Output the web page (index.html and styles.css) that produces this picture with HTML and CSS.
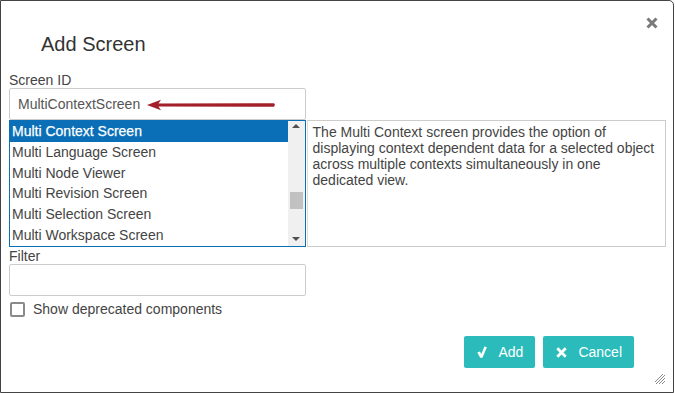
FILE: index.html
```html
<!DOCTYPE html>
<html>
<head>
<meta charset="utf-8">
<link rel="stylesheet" href="styles.css">
</head>
<body>
<div class="dialog">
  <button class="close" aria-label="Close">
    <svg width="12" height="12" viewBox="0 0 12 12"><path d="M1.5 1.5 L10.5 10.5 M10.5 1.5 L1.5 10.5" stroke="#7a7a7a" stroke-width="3" fill="none"/></svg>
  </button>
  <h1 class="title">Add Screen</h1>
  <div class="content">
    <label class="label">Screen ID</label>
    <div class="input id-input">
      <span class="value">MultiContextScreen</span>
      <svg class="arrow" width="130" height="12" viewBox="0 0 130 12"><path d="M0 6 L14 0.8 L11.5 4.4 L127 4.3 Q128.6 6 127 7.7 L11.5 7.6 L14 11.2 Z" fill="#a3202a"/></svg>
    </div>
    <div class="row">
      <div class="list">
        <ul class="items">
          <li class="item selected">Multi Context Screen</li>
          <li class="item">Multi Language Screen</li>
          <li class="item">Multi Node Viewer</li>
          <li class="item">Multi Revision Screen</li>
          <li class="item">Multi Selection Screen</li>
          <li class="item">Multi Workspace Screen</li>
        </ul>
        <div class="scrollbar">
          <span class="sb-arrow up"></span>
          <span class="sb-track"><span class="sb-thumb"></span></span>
          <span class="sb-arrow down"></span>
        </div>
      </div>
      <div class="desc">The Multi Context screen provides the option of displaying context dependent data for a selected object across multiple contexts simultaneously in one dedicated view.</div>
    </div>
    <label class="label filter-label">Filter</label>
    <div class="input filter-input"></div>
    <label class="check-row"><span class="checkbox"></span><span>Show deprecated components</span></label>
  </div>
  <div class="footer">
    <button class="btn">
      <svg width="10" height="12" viewBox="0 0 10 12"><path d="M0.3 6.4 L2.9 5.4 L4.4 8 L7.4 0.4 L9.9 1.2 L5.4 11.7 L3.2 11.7 Z" fill="#fff"/></svg>
      <span>Add</span>
    </button>
    <button class="btn">
      <svg width="11" height="11" viewBox="0 0 11 11"><path d="M1.3 1.3 L9.7 9.7 M9.7 1.3 L1.3 9.7" stroke="#fff" stroke-width="2.8" fill="none"/></svg>
      <span>Cancel</span>
    </button>
  </div>
  <svg class="grip" width="12" height="12" viewBox="0 0 12 12"><path d="M11 2 L2 11 M11 5 L5 11 M11 8 L8 11 M9 1 L1 9" stroke="#8a8a8a" stroke-width="1" fill="none"/></svg>
</div>
</body>
</html>
```

FILE: styles.css
```css
html, body {
  margin: 0;
  padding: 0;
  background: #fff;
}
body {
  font-family: "Liberation Sans", Arial, sans-serif;
  font-size: 14px;
  color: #333;
}
.dialog {
  position: relative;
  box-sizing: border-box;
  width: 674px;
  height: 393px;
  border: 1px solid #444;
  border-radius: 0 5px 0 0;
  display: flex;
  flex-direction: column;
}
.close {
  position: absolute;
  top: 16px;
  right: 15px;
  border: 0;
  background: none;
  padding: 0;
  width: 12px;
  height: 12px;
  display: block;
}
.close svg { display: block; }
.title {
  margin: 31px 0 0 40px;
  font-size: 20px;
  line-height: 24px;
  font-weight: normal;
  color: #333;
}
.content {
  padding: 0 7px 0 8px;
  display: flex;
  flex-direction: column;
}
.label {
  display: block;
  line-height: 16px;
  color: #444;
}
.content > .label:first-child { margin-top: 16px; }
.input {
  box-sizing: border-box;
  width: 297px;
  height: 32px;
  border: 1px solid #ccc;
  border-radius: 2px;
  display: flex;
  align-items: center;
  padding-left: 8px;
  color: #555;
}
.id-input .arrow {
  margin-left: 7px;
  margin-top: 1px;
}
.row {
  display: flex;
  height: 127px;
}
.list {
  box-sizing: border-box;
  width: 297px;
  height: 127px;
  border: 1px solid #0a6fb7;
  display: flex;
}
.items {
  list-style: none;
  margin: 0;
  padding: 0;
  flex: 1;
  overflow: hidden;
}
.item {
  height: 20.8px;
  line-height: 20.8px;
  padding-left: 2px;
  color: #444;
  white-space: nowrap;
}
.item.selected {
  background: #0a6fb7;
  color: #fff;
  -webkit-text-stroke: 0.25px #fff;
}
.scrollbar {
  width: 17px;
  background: #f0f0f0;
  display: flex;
  flex-direction: column;
  align-items: center;
}
.sb-arrow {
  width: 0;
  height: 0;
  border-left: 4px solid transparent;
  border-right: 4px solid transparent;
}
.sb-arrow.up {
  border-bottom: 4px solid #505050;
  margin-top: 3px;
}
.sb-arrow.down {
  border-top: 4px solid #505050;
  margin-bottom: 5px;
}
.sb-track {
  flex: 1;
  width: 100%;
  display: flex;
  flex-direction: column;
  align-items: center;
  padding-top: 64px;
}
.sb-thumb {
  width: 13px;
  height: 17px;
  background: #c1c1c1;
}
.desc {
  box-sizing: border-box;
  width: 360px;
  height: 127px;
  border: 1px solid #ccc;
  border-left: 1px solid #ddd;
  margin-left: 1px;
  padding: 3px 4px 0 5px;
  line-height: 16px;
  color: #444;
}
.filter-label {
  margin-top: 1px;
}
.check-row {
  display: flex;
  align-items: center;
  margin-top: 5px;
  height: 16px;
  color: #444;
}
.checkbox {
  box-sizing: border-box;
  width: 15px;
  height: 15px;
  border: 2px solid #8a8a8a;
  border-radius: 2px;
  margin: 1px 8px 0 1px;
}
.footer {
  display: flex;
  justify-content: flex-end;
  gap: 8px;
  padding: 19px 39px 0 0;
}
.btn {
  box-sizing: border-box;
  height: 32px;
  border: 0;
  border-radius: 2px;
  background: #2bbbbb;
  color: #fff;
  font-family: "Liberation Sans", Arial, sans-serif;
  font-size: 14px;
  display: flex;
  align-items: center;
  gap: 11px;
  padding: 0 12px 0 13px;
}
.btn svg { display: block; }
.grip {
  position: absolute;
  right: 7px;
  bottom: 7px;
}
```
